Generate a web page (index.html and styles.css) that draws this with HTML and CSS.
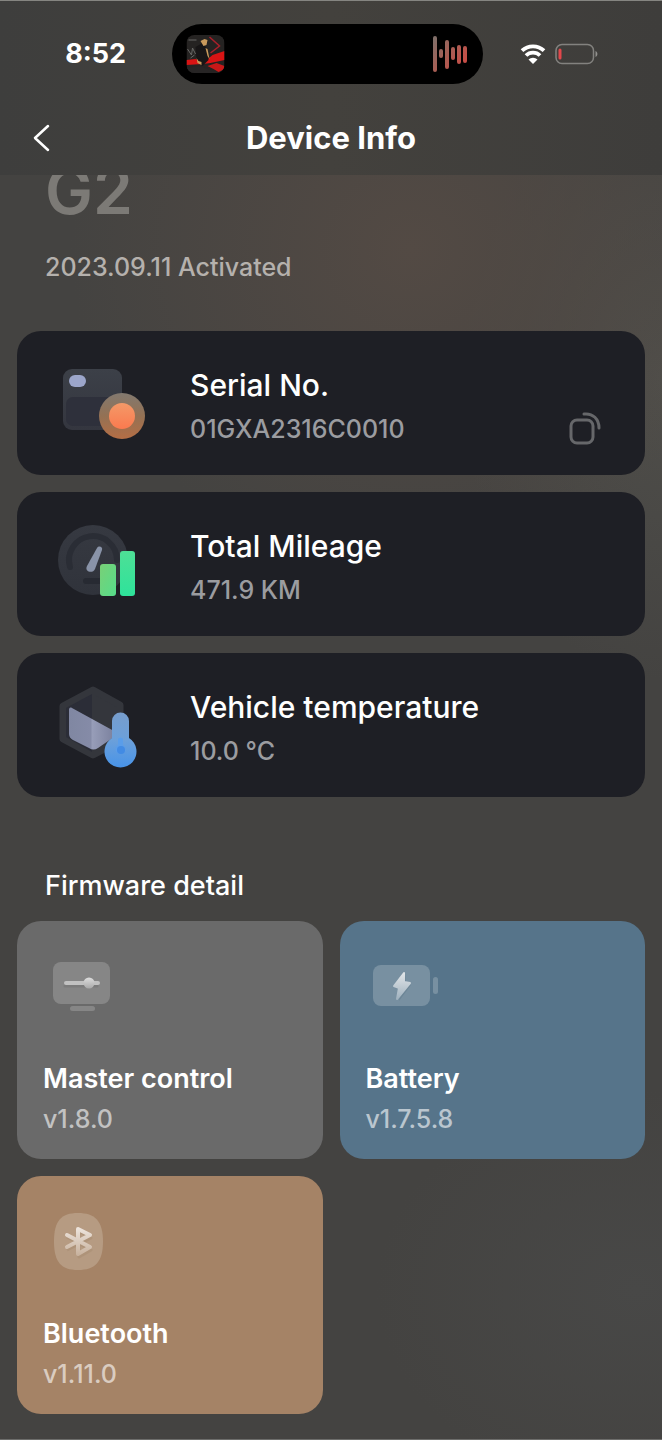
FILE: index.html
```html
<!DOCTYPE html>
<html lang="en">
<head>
<meta charset="utf-8">
<meta name="viewport" content="width=device-width, initial-scale=1">
<title>Device Info</title>
<link rel="stylesheet" href="styles.css">
</head>
<body>
<div class="page">
  <header class="top">
    <div class="status">
      <time class="clock">8:52</time>
      <div class="island">
        <svg class="cover" viewBox="0 0 38 38" aria-hidden="true">
          <clipPath id="cv"><rect width="38" height="38" rx="8"/></clipPath>
          <g clip-path="url(#cv)">
            <rect width="38" height="38" fill="#252322"/>
            <path d="M0 25l9-1 9 3 8-7 12-4v9l-14 3-8 1-16 1z" fill="#d91414"/>
            <path d="M21 31l9-3 8 3v3l-6 3-5-3z" fill="#c81818"/>
            <path d="M23 2l10 9-9 7" fill="none" stroke="#a8202a" stroke-width="1.500"/>
            <path d="M2 5h8M1 14l4 6 1-7 3 6M4 23l4-3" stroke="#686866" stroke-width="1" fill="none"/>
            <path d="M9 12l7-4 5 6 1 11-6 6-6-7z" fill="#171516"/>
            <path d="M14 6l4-2 3 1-1 5-3 1zM19 13l2 1 1 5 1 5-2-3zM10 23l2 3 3 1v3l-4-2z" fill="#c99a5c"/>
            <path d="M0 33l12-2 12 4v3H0z" fill="#272525"/>
          </g>
        </svg>
        <svg class="wave" viewBox="0 0 36 38" aria-hidden="true">
          <defs><linearGradient id="wv" gradientUnits="userSpaceOnUse" x1="2" y1="2" x2="34" y2="26"><stop stop-color="#806f69"/><stop offset=".45" stop-color="#a46056"/><stop offset="1" stop-color="#c94c45"/></linearGradient></defs>
          <path d="M2 3v32M8 16v5M14 7v25M20 14v9M26 12v15M32 13v13" stroke="url(#wv)" stroke-width="4" stroke-linecap="round"/>
        </svg>
      </div>
      <div class="signals">
        <svg class="wifi" viewBox="0 0 26 20" role="img" aria-label="Wi-Fi">
          <path d="M2 6.700a16 16 0 0 1 22 0M6 11.500a10 10 0 0 1 14 0" fill="none" stroke="#fff" stroke-width="3.800"/>
          <path d="M8.500 15.500a6.500 6.500 0 0 1 9 0L13 20z" fill="#fff"/>
        </svg>
        <svg class="power" viewBox="0 0 43 22" role="img" aria-label="Low battery">
          <rect x="1" y="1.500" width="37.500" height="19" rx="6" fill="none" stroke="#83827f" stroke-width="1.500"/>
          <path d="M40.500 8c2.500 1 2.500 5 0 6z" fill="#92918e"/>
          <rect x="3.500" y="5.500" width="3" height="11" rx="1.500" fill="#e2474b"/>
        </svg>
      </div>
    </div>
    <nav class="bar">
      <button class="back" type="button" aria-label="Back">
        <svg viewBox="0 0 18 28" aria-hidden="true"><path d="M15 2L2 14l13 12" fill="none" stroke="#fff" stroke-width="2.500" stroke-linecap="round" stroke-linejoin="round"/></svg>
      </button>
      <h1 class="title">Device Info</h1>
    </nav>
  </header>

  <main class="content">
    <section class="hero">
      <h2 class="model">G2</h2>
      <p class="activated">2023.09.11 Activated</p>
    </section>

    <section class="cards">
      <article class="card">
        <svg class="card-icon" viewBox="0 0 96 96" aria-hidden="true">
          <defs>
            <linearGradient id="s1" x2="0" y2="1"><stop stop-color="#3c4048"/><stop offset="1" stop-color="#34363f"/></linearGradient>
            <linearGradient id="s2" x2="0" y2="1"><stop stop-color="#82796f"/><stop offset=".5" stop-color="#947154"/><stop offset="1" stop-color="#b56e45"/></linearGradient>
            <linearGradient id="s3" x2="0" y2="1"><stop stop-color="#f49968"/><stop offset="1" stop-color="#fa7a4f"/></linearGradient>
          </defs>
          <rect x="6" y="14" width="59" height="61" rx="9" fill="url(#s1)"/>
          <rect x="9" y="42" width="53" height="29" rx="7" fill="#2e303b"/>
          <rect x="12" y="20" width="17" height="12" rx="6" fill="#9ca6cb"/>
          <circle cx="65" cy="61" r="23" fill="url(#s2)"/>
          <circle cx="65" cy="61" r="13" fill="url(#s3)"/>
        </svg>
        <div class="card-text"><h3 class="label">Serial No.</h3><p class="value">01GXA2316C0010</p></div>
        <button class="copy" type="button" aria-label="Copy serial number">
          <svg viewBox="0 0 36 36" aria-hidden="true"><g fill="none" stroke="#66676a" stroke-width="3" stroke-linecap="round"><rect x="4" y="11" width="22" height="23" rx="6"/><path d="M17 5c9-1 15 5 15 14"/></g></svg>
        </button>
      </article>

      <article class="card">
        <svg class="card-icon" viewBox="0 0 96 96" aria-hidden="true">
          <defs>
            <linearGradient id="m1" x2="0" y2="1"><stop stop-color="#363941"/><stop offset="1" stop-color="#30333b"/></linearGradient>
            <linearGradient id="m2" x2="1" y2="1"><stop stop-color="#79d077"/><stop offset="1" stop-color="#56dc8a"/></linearGradient>
            <linearGradient id="m3" x2="0" y2="1"><stop stop-color="#4edf96"/><stop offset="1" stop-color="#2ee39b"/></linearGradient>
          </defs>
          <circle cx="36" cy="44" r="35" fill="url(#m1)"/>
          <path d="M13 51A24 24 0 1 1 60 44" fill="none" stroke="#2a2d35" stroke-width="6" stroke-linecap="round"/>
          <path d="M29 65h20" stroke="#272a32" stroke-width="6" stroke-linecap="round"/>
          <path d="M30 50l10-18c2-3 6-1 5 2l-7 19c-2 5-11 3-8-3z" fill="#8993a8"/>
          <rect x="43" y="48" width="16" height="32" rx="3" fill="url(#m2)"/>
          <rect x="63" y="35" width="15" height="45" rx="3" fill="url(#m3)"/>
        </svg>
        <div class="card-text"><h3 class="label">Total Mileage</h3><p class="value">471.9 KM</p></div>
      </article>

      <article class="card">
        <svg class="card-icon" viewBox="0 0 96 96" aria-hidden="true">
          <defs>
            <linearGradient id="t1"><stop stop-color="#8087a2"/><stop offset=".48" stop-color="#858ba7"/><stop offset=".52" stop-color="#979db8"/><stop offset="1" stop-color="#7b819e"/></linearGradient>
            <linearGradient id="t2" x2="0" y2="1"><stop stop-color="#779dcc"/><stop offset=".5" stop-color="#6ba0da"/><stop offset="1" stop-color="#4893e8"/></linearGradient>
          </defs>
          <path d="M36 13l27 15v36L36 78 6 62V29z" fill="#34363c" stroke="#34363c" stroke-width="7" stroke-linejoin="round"/>
          <path d="M35 17L9 31v29l26 15z" fill="#2b2d37"/>
          <path d="M15 31l42 23v6L41 71c-3 2-6 2-9 0L16 63c-2-1-4-3-4-6V33c0-2 1-3 3-2z" fill="url(#t1)"/>
          <path d="M55 44a8 8 0 0 1 17 0v17a16 16 0 1 1-17 0z" fill="url(#t2)"/>
          <path d="M61 62a3 3 0 0 1 5 0v6a5 5 0 1 1-5 0z" fill="#5a9de9"/>
          <circle cx="64" cy="73" r="4" fill="#428be4"/>
        </svg>
        <div class="card-text"><h3 class="label">Vehicle temperature</h3><p class="value">10.0 °C</p></div>
      </article>
    </section>

    <section class="firmware">
      <h2 class="heading">Firmware detail</h2>
      <div class="tiles">
        <article class="tile tile-master">
          <svg class="tile-icon" viewBox="0 0 96 80" aria-hidden="true">
            <defs><linearGradient id="f1" x2="0" y2="1"><stop stop-color="#dedede"/><stop offset="1" stop-color="#a9a9a9"/></linearGradient></defs>
            <rect x="10" y="17" width="57" height="42" rx="8" fill="#868686"/>
            <rect x="27" y="61" width="25" height="5" rx="2.500" fill="#868686"/>
            <path d="M22 41h32" stroke="#6c6c6c" stroke-width="3" stroke-linecap="round" opacity=".4"/>
            <rect x="21" y="36" width="36" height="4" rx="2" fill="#c1c1c1"/>
            <circle cx="46" cy="38" r="5.500" fill="url(#f1)"/>
          </svg>
          <h3 class="name">Master control</h3><p class="version">v1.8.0</p>
        </article>
        <article class="tile tile-battery">
          <svg class="tile-icon" viewBox="0 0 96 80" aria-hidden="true">
            <defs><linearGradient id="f2" x2="0" y2="1"><stop stop-color="#e1e5e8"/><stop offset="1" stop-color="#a0b2bf"/></linearGradient></defs>
            <rect x="7" y="20" width="57" height="41" rx="8" fill="#7890a1"/>
            <rect x="67" y="32" width="5" height="17" rx="2.500" fill="#7890a1"/>
            <path d="M39 29L29 43l6 2-2 11 12-16-5-2z" fill="#617b8e" opacity=".5"/>
            <path d="M38 28L28 41l5 2-2 11 13-16-6-1z" fill="url(#f2)" stroke="url(#f2)" stroke-width="2" stroke-linejoin="round"/>
          </svg>
          <h3 class="name">Battery</h3><p class="version">v1.7.5.8</p>
        </article>
        <article class="tile tile-bluetooth">
          <svg class="tile-icon" viewBox="0 0 96 80" aria-hidden="true">
            <defs><linearGradient id="f3" gradientUnits="userSpaceOnUse" x1="34" y1="27" x2="34" y2="55"><stop stop-color="#eee6df"/><stop offset="1" stop-color="#c8b29e"/></linearGradient></defs>
            <path d="M35 13C52 13 60 21 60 41.500S52 70 35 70 11 62 11 41.500 18 13 35 13z" fill="#b69b82"/>
            <path d="M24 37l24 13-12 7V31l12 7-24 12" fill="none" stroke="#9c8068" stroke-width="3" stroke-linejoin="round" opacity=".3"/>
            <path d="M24 35l23 12-12 7V29l12 6-23 12" fill="none" stroke="url(#f3)" stroke-width="4" stroke-linecap="round" stroke-linejoin="round"/>
          </svg>
          <h3 class="name">Bluetooth</h3><p class="version">v1.11.0</p>
        </article>
      </div>
    </section>
  </main>
</div>
</body>
</html>
```

FILE: styles.css
```css
* {
  box-sizing: border-box;
}

body,
h1,
h2,
h3,
p {
  margin: 0;
}

body {
  background: #444341;
  color: #fff;
  font-family: Inter, "Liberation Sans", sans-serif;
}

svg {
  display: block;
}

button {
  padding: 0;
  border: 0;
  background: none;
  cursor: pointer;
}

.page {
  min-height: 100vh;
  border-bottom: 1px solid #6d6d6b;
  background:
    radial-gradient(ellipse 340px 320px at 62% 250px, #534a44, #534a4400),
    radial-gradient(ellipse 200px 300px at 100% 380px, #4f4e4a, #4f4e4a00),
    radial-gradient(ellipse 260px 200px at 96% 1290px, #484847, #48484700),
    #444341;
}

.top {
  position: sticky;
  top: 0;
  z-index: 1;
  padding-bottom: 15px;
  border-top: 1px solid #858581;
  background: linear-gradient(90deg, #3e3e3d, #43413d 50%, #3e3d3b);
}

.status {
  display: grid;
  grid-template-columns: 1fr 311px 1fr;
  align-items: center;
  padding: 23px 7px 0 0;
}

.clock {
  justify-self: end;
  padding-right: 46px;
  font-size: 27px;
  font-weight: 700;
  line-height: 32px;
}

.island {
  display: flex;
  align-items: center;
  justify-content: space-between;
  height: 60px;
  padding: 0 14px;
  border-radius: 30px;
  background: #000;
}

.cover {
  width: 39px;
  height: 38px;
}

.wave {
  width: 36px;
  height: 38px;
}

.signals {
  display: flex;
  align-items: center;
  gap: 9px;
  padding-left: 37px;
}

.wifi {
  width: 26px;
  height: 20px;
}

.power {
  width: 43px;
  height: 22px;
}

.bar {
  display: grid;
  grid-template-columns: 44px 1fr 44px;
  align-items: center;
  padding: 32px 20px 0;
}

.back {
  display: grid;
  place-items: center;
  height: 44px;
}

.back svg {
  width: 18px;
  height: 28px;
}

.title {
  font-size: 31px;
  font-weight: 700;
  line-height: 44px;
  text-align: center;
}

.content {
  padding: 0 17px 25px;
}

.hero {
  margin-top: -20px;
  padding: 0 28px;
}

.model {
  color: #7c7a76;
  font-size: 64px;
  font-weight: 600;
  line-height: 72px;
}

.activated {
  margin-top: 24px;
  color: #b5b1ad;
  font-size: 25px;
  font-weight: 500;
  line-height: 32px;
}

.cards {
  display: grid;
  gap: 17px;
  margin-top: 48px;
}

.card {
  display: flex;
  align-items: center;
  gap: 37px;
  padding: 24px 42px 24px 40px;
  border-radius: 24px;
  background: #1e1f25;
}

.card-icon {
  flex: none;
  width: 96px;
  height: 96px;
}

.card-text {
  flex: 1;
  padding-top: 6px;
}

.label {
  font-size: 30px;
  font-weight: 500;
  line-height: 40px;
}

.value {
  margin-top: 6px;
  color: #9b9ca0;
  font-size: 25px;
  font-weight: 500;
  line-height: 36px;
}

.copy {
  align-self: flex-end;
  margin-bottom: 6px;
}

.copy svg {
  width: 36px;
  height: 36px;
}

.firmware {
  margin-top: 71px;
}

.heading {
  padding: 0 28px;
  font-size: 27px;
  font-weight: 500;
  line-height: 36px;
}

.tiles {
  display: grid;
  grid-template-columns: 1fr 1fr;
  gap: 17px;
  margin-top: 17px;
}

.tile {
  padding: 24px 26px;
  border-radius: 24px;
}

.tile-master {
  background: #6a6a6a;
}

.tile-battery {
  background: #56748a;
}

.tile-bluetooth {
  background: #a58366;
}

.tile-icon {
  width: 96px;
  height: 80px;
}

.name {
  margin-top: 36px;
  font-size: 27px;
  font-weight: 600;
  line-height: 36px;
}

.version {
  margin-top: 6px;
  color: #ffffff99;
  font-size: 25px;
  font-weight: 500;
  line-height: 32px;
}
```
